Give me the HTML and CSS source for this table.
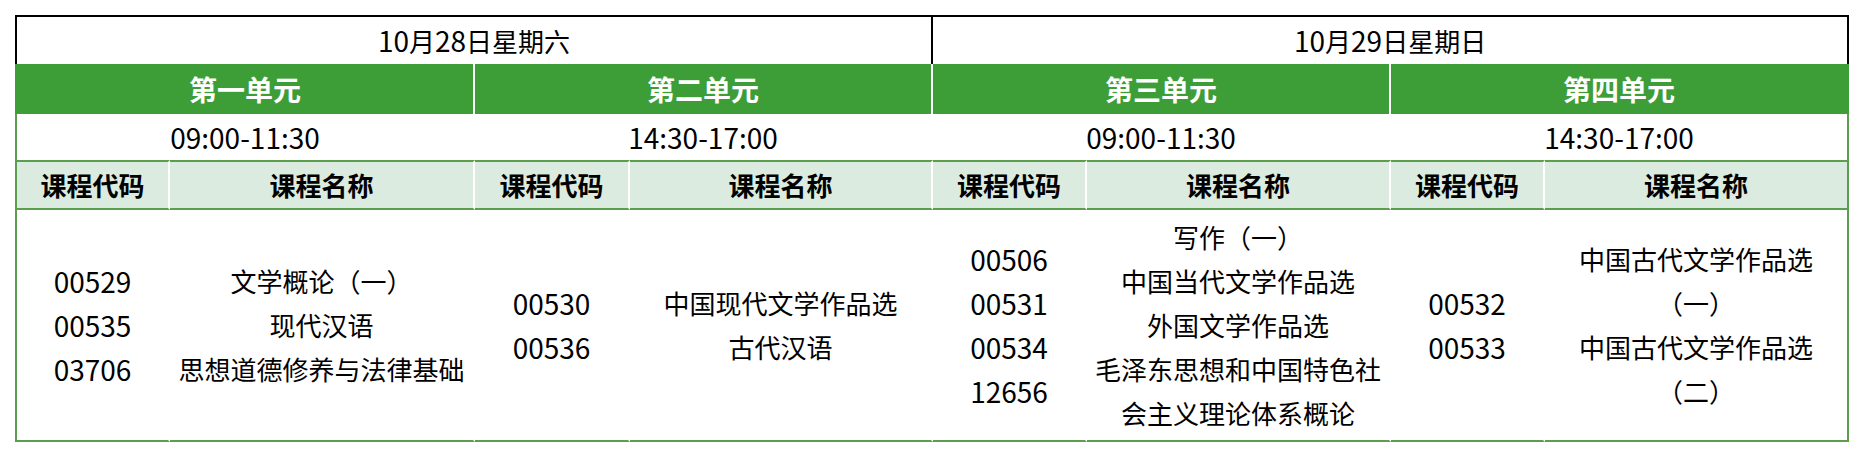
FILE: index.html
```html
<!DOCTYPE html>
<html lang="zh-CN">
<head>
<meta charset="utf-8">
<title>考试安排</title>
<link rel="stylesheet" href="styles.css">
</head>
<body>
<table class="schedule">
  <colgroup>
    <col class="w155"><col class="w305"><col class="w155"><col class="w303">
    <col class="w154"><col class="w304"><col class="w154"><col class="w304">
  </colgroup>
  <tr class="row-date">
    <td colspan="4" class="date date-first"><span class="num">10</span>月<span class="num">28</span>日星期六</td>
    <td colspan="4" class="date date-last"><span class="num">10</span>月<span class="num">29</span>日星期日</td>
  </tr>
  <tr class="row-unit">
    <td colspan="2" class="first">第一单元</td>
    <td colspan="2">第二单元</td>
    <td colspan="2">第三单元</td>
    <td colspan="2" class="last">第四单元</td>
  </tr>
  <tr class="row-time">
    <td colspan="2" class="first">09:00-11:30</td>
    <td colspan="2">14:30-17:00</td>
    <td colspan="2">09:00-11:30</td>
    <td colspan="2" class="last">14:30-17:00</td>
  </tr>
  <tr class="row-head">
    <th class="first">课程代码</th><th>课程名称</th>
    <th>课程代码</th><th>课程名称</th>
    <th>课程代码</th><th>课程名称</th>
    <th>课程代码</th><th class="last">课程名称</th>
  </tr>
  <tr class="row-body">
    <td class="code first">00529<br>00535<br>03706</td>
    <td class="name">文学概论（一）<br>现代汉语<br>思想道德修养与法律基础</td>
    <td class="code">00530<br>00536</td>
    <td class="name">中国现代文学作品选<br>古代汉语</td>
    <td class="code">00506<br>00531<br>00534<br>12656</td>
    <td class="name">写作（一）<br>中国当代文学作品选<br>外国文学作品选<br>毛泽东思想和中国特色社<br>会主义理论体系概论</td>
    <td class="code">00532<br>00533</td>
    <td class="name last">中国古代文学作品选<br>（一）<br>中国古代文学作品选<br>（二）</td>
  </tr>
</table>
</body>
</html>
```

FILE: styles.css
```css
html, body {
  margin: 0;
  padding: 0;
  background: #ffffff;
}

body {
  font-family: "Noto Sans CJK SC", "Noto Sans", sans-serif;
  color: #000000;
}

.schedule {
  margin: 15px 0 0 15px;
  width: 1834px;
  table-layout: fixed;
  border-collapse: separate;
  border-spacing: 0;
}

.w155 { width: 155px; }
.w305 { width: 305px; }
.w303 { width: 303px; }
.w154 { width: 154px; }
.w304 { width: 304px; }

.schedule td,
.schedule th {
  box-sizing: border-box;
  padding: 0;
  text-align: center;
  vertical-align: middle;
  font-size: 26px;
  font-weight: 400;
  border: 0 solid transparent;
  border-right: 2px solid #ffffff;
  white-space: nowrap;
}

.schedule .num {
  font-size: 28px;
}

/* date row */
.row-date td {
  height: 48px;
  border-top: 2px solid #000000;
  border-right: 2px solid #000000;
  line-height: 46px;
}
.row-date .date-first {
  border-left: 2px solid #000000;
}

/* unit row */
.row-unit td {
  height: 50px;
  background: #3d9e38;
  color: #ffffff;
  font-size: 28px;
  font-weight: 700;
  line-height: 50px;
}
.row-unit .first { border-left: 2px solid #3d9e38; }
.row-unit .last { border-right: 2px solid #3d9e38; }

/* time row */
.row-time td {
  height: 46px;
  font-size: 28px;
  line-height: 46px;
}
.row-time .first { border-left: 2px solid #5a9e4e; }
.row-time .last { border-right: 2px solid #5a9e4e; }

/* heading row */
.row-head th {
  height: 50px;
  background: #dcebdf;
  font-weight: 700;
  border-top: 2px solid #5a9e4e;
  border-bottom: 2px solid #5a9e4e;
  line-height: 44px;
}
.row-head .first { border-left: 2px solid #5a9e4e; }
.row-head .last { border-right: 2px solid #5a9e4e; }

/* body row */
.row-body td {
  height: 232px;
  line-height: 44px;
  border-bottom: 2px solid #5a9e4e;
}
.row-body .code {
  font-size: 28px;
}
.row-body .first { border-left: 2px solid #5a9e4e; }
.row-body .last { border-right: 2px solid #5a9e4e; }
```
